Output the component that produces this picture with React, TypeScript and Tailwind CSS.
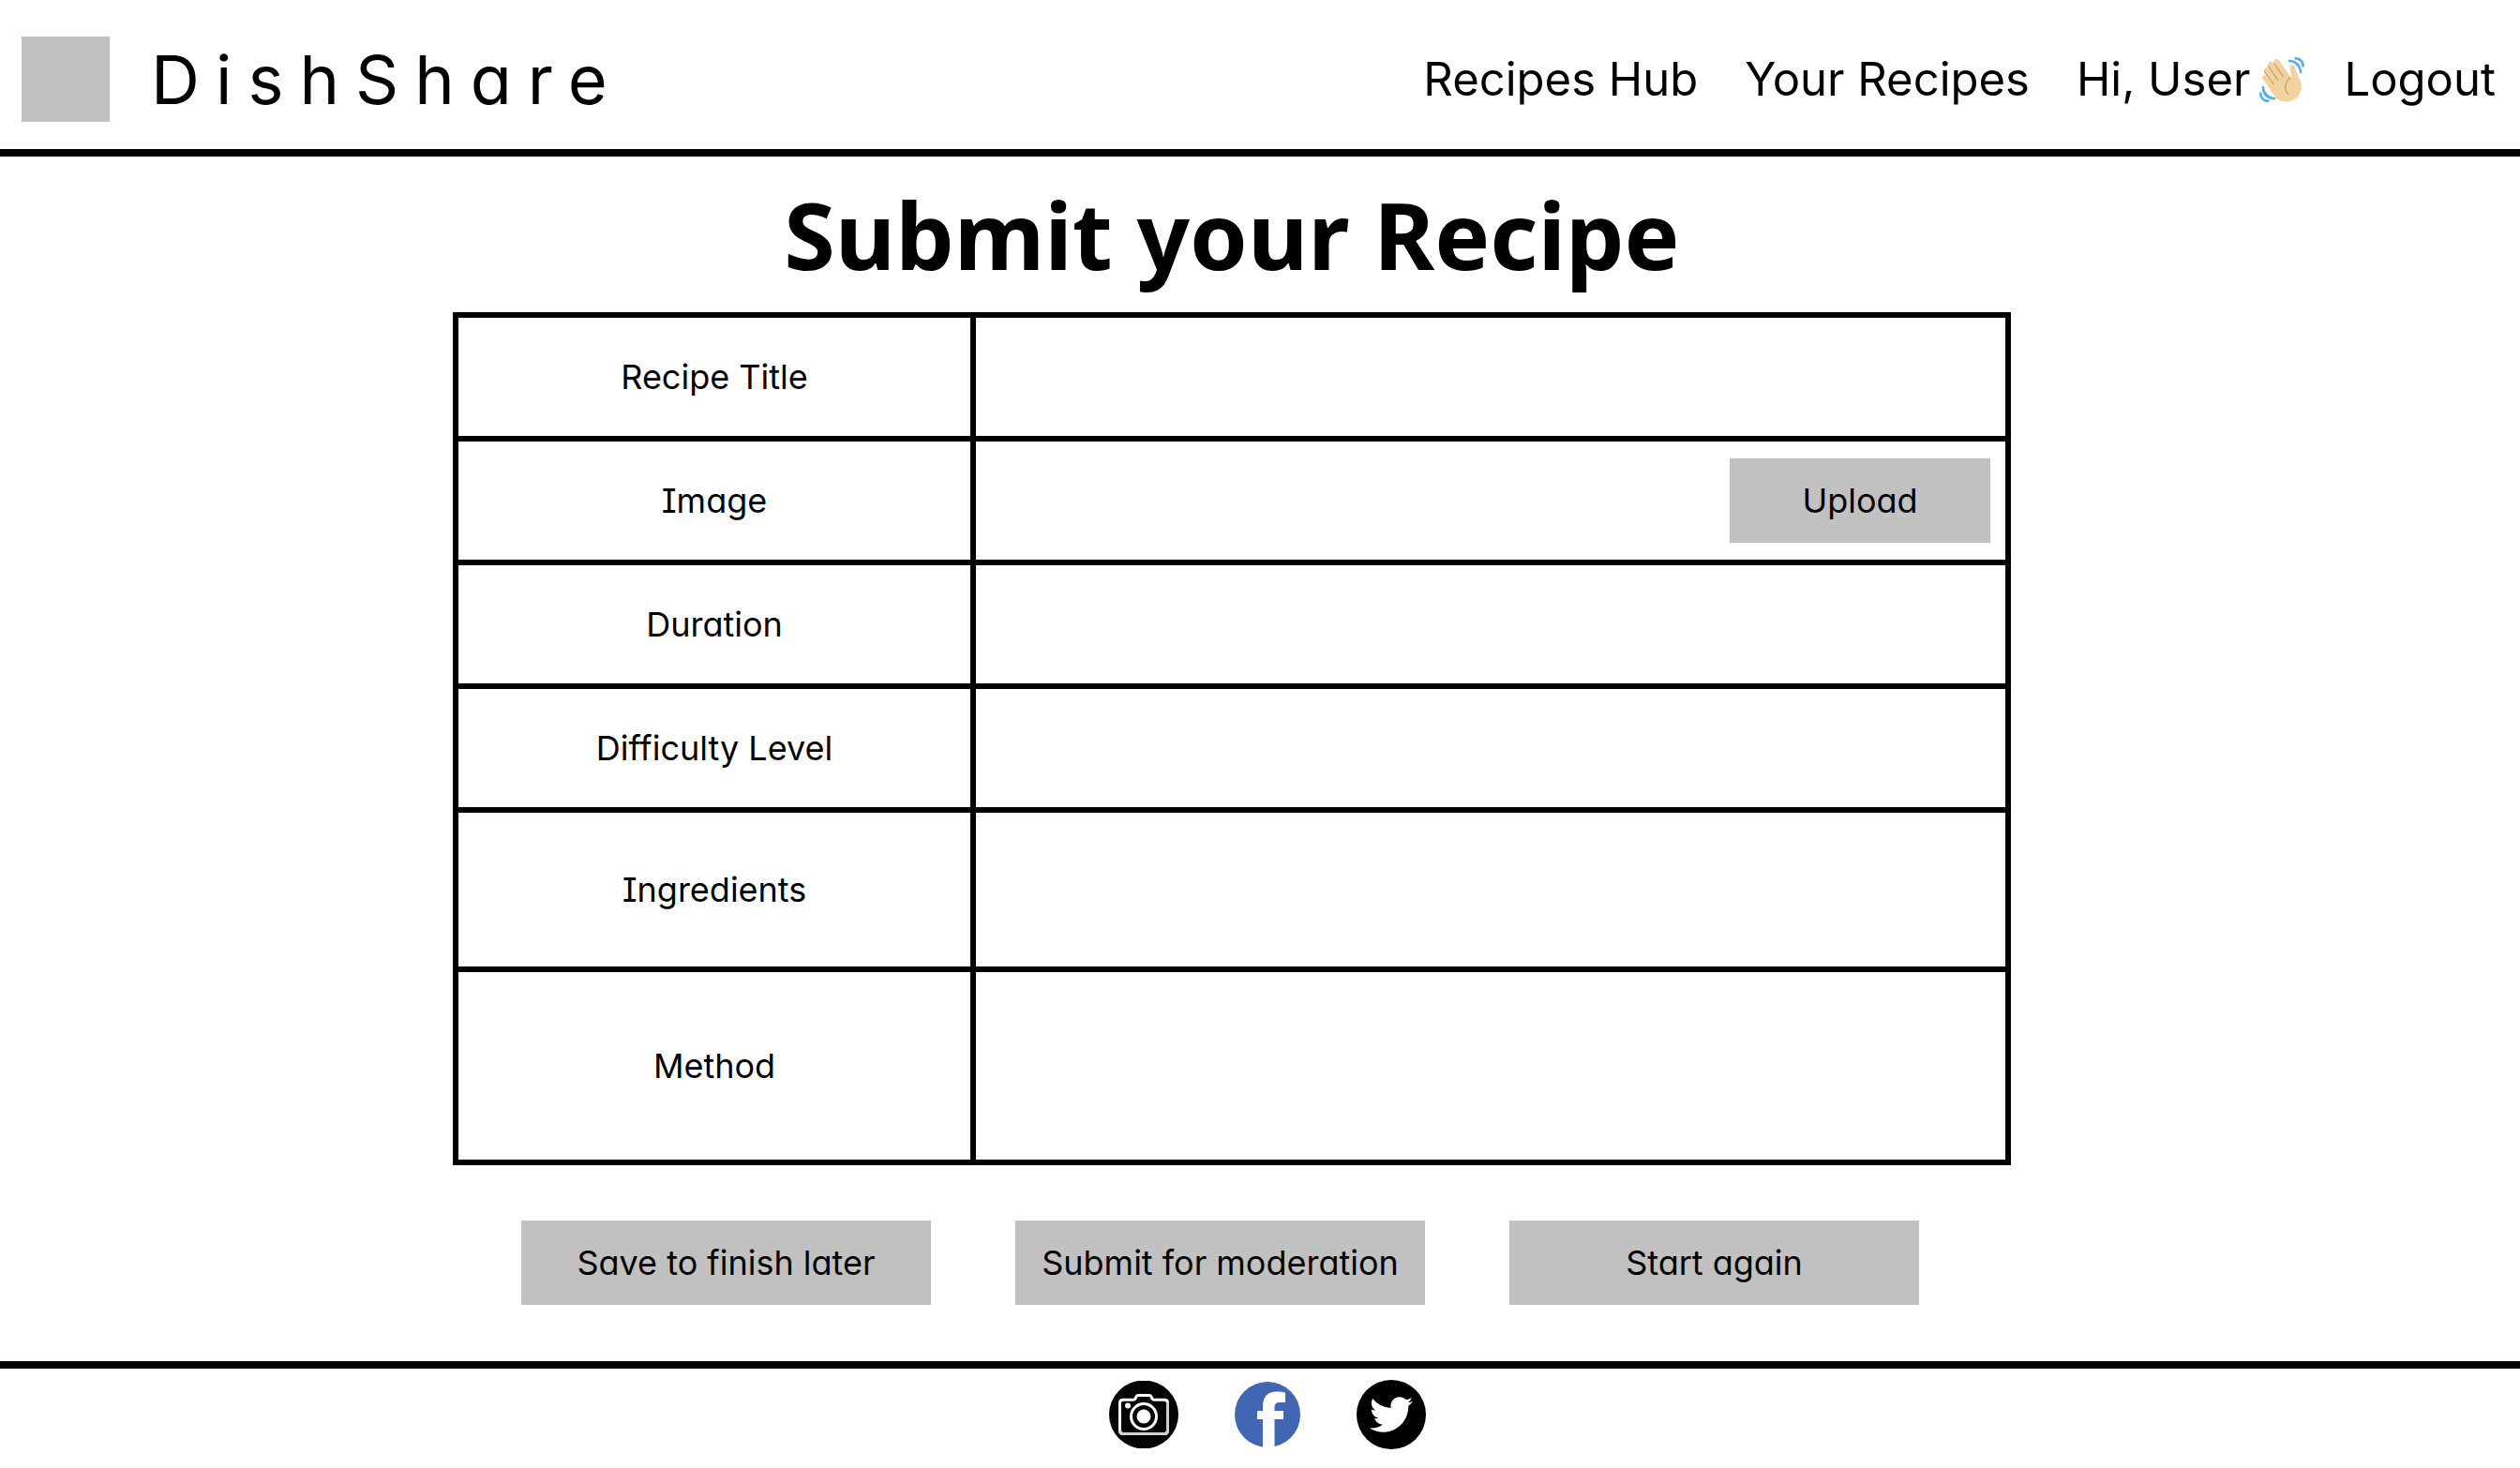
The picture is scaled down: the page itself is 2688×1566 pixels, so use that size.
import { FaTwitter } from "react-icons/fa";

function WavingHand() {
  return (
    <svg viewBox="0 0 36 36" className="h-[48px] w-[48px]" role="img" aria-label="waving hand">
      <path fill="#D2A077" d="M4.861 9.147c.94-.657 2.357-.531 3.201.166l-.968-1.407c-.779-1.111-.5-2.313.612-3.093 1.112-.777 4.263 1.312 4.263 1.312-.786-1.122-.639-2.544.483-3.331 1.122-.784 2.67-.513 3.456.611l10.42 14.72L25 31l-11.083-4.042L4.25 12.625c-.793-1.129-.519-2.686.611-3.478z" />
      <path fill="#F3D2A2" d="M2.695 17.336s-1.132-1.65.519-2.781c1.649-1.131 2.78.518 2.78.518l5.251 7.658c.181-.302.379-.6.6-.894L4.557 11.21s-1.131-1.649.519-2.78c1.649-1.131 2.78.518 2.78.518l6.855 9.997c.255-.208.516-.417.785-.622L7.549 6.732s-1.131-1.649.519-2.78c1.649-1.131 2.78.518 2.78.518l7.947 11.589c.292-.179.581-.334.871-.498L12.238 4.729s-1.131-1.649.518-2.78c1.649-1.131 2.78.518 2.78.518l7.854 11.454 1.194 1.742c-4.948 3.394-5.419 9.779-2.592 13.902.565.825 1.39.26 1.39.26-3.393-4.949-2.357-10.51 2.592-13.903L24.515 8.62s-.545-1.924 1.378-2.47c1.924-.545 2.47 1.379 2.47 1.379l1.685 5.004c.668 1.984 1.379 3.961 2.32 5.831 2.657 5.28 1.07 11.842-3.94 15.279-5.465 3.747-12.936 2.354-16.684-3.11L2.695 17.336z" />
      <g fill="#5DADEC">
        <path d="M12 32.042C8 32.042 3.958 28 3.958 24c0-.553-.405-1-.958-1s-1.042.447-1.042 1C1.958 30 6 34.042 12 34.042c.553 0 1-.489 1-1.042s-.447-.958-1-.958z" />
        <path d="M7 34c-3 0-5-2-5-5 0-.553-.447-1-1-1s-1 .447-1 1c0 4 3 7 7 7 .553 0 1-.447 1-1s-.447-1-1-1zM24 2c-.552 0-1 .448-1 1s.448 1 1 1c4 0 8 3.589 8 8 0 .552.448 1 1 1s1-.448 1-1c0-5.514-4-10-10-10z" />
        <path d="M29 .042c-.552 0-1 .406-1 .958s.448 1.042 1 1.042c3 0 4.958 2.225 4.958 4.958 0 .552.489 1 1.042 1s.958-.448.958-1C35.958 3.163 33 .042 29 .042z" />
      </g>
    </svg>
  );
}

function CameraIcon() {
  return (
    <svg viewBox="0 0 74 72" className="h-[72px] w-[74px]" aria-hidden="true">
      <ellipse cx="37" cy="36" rx="37" ry="36.5" fill="#050404" />
      <g fill="none" stroke="#fff" strokeWidth="3" strokeLinejoin="round">
        <path d="M15 20.200h10.500q2.500 0 3-2l.5-1.200q.6-1.500 2.400-1.500h11.200q1.800 0 2.400 1.500l.5 1.200q.5 2 3 2H59q3.500 0 3.500 3.500V53q0 3.500-3.500 3.500H15q-3.500 0-3.500-3.500V23.700q0-3.500 3.500-3.500z" />
        <path d="M62.500 23V53q0 3.500-3.500 3.500H15q-3.500 0-3.500-3.500" stroke="#cfcfcf" />
        <circle cx="37" cy="38" r="13.500" />
      </g>
      <circle cx="37" cy="38" r="7.500" fill="#fff" />
      <circle cx="20" cy="26.500" r="3" fill="#fff" />
    </svg>
  );
}

function FacebookIcon() {
  return (
    <svg viewBox="0 0 70 70" className="h-[70px] w-[70px]" aria-hidden="true">
      <circle cx="35" cy="35" r="35" fill="#4267b2" />
      <path fill="#fff" d="M30 70V40h-6V31h6v-4.500C30 16 35 10.500 45 10.500q5 0 9 1V22h-5.500C44 22 42.500 24 42.500 27.500V31H52v9h-9.500v30z" />
    </svg>
  );
}

const navLink = "hover:underline";
const field = "block w-full bg-transparent px-6 text-[36px] outline-none";
const action = "h-[90px] flex-1 whitespace-nowrap bg-[#c1c1c1] text-[36px] leading-[40px]";

const rows = [
  { id: "title", label: "Recipe Title", height: "h-[132px]", input: "h-[126px]" },
  { id: "image", label: "Image", height: "h-[132px]", input: "h-[126px]", upload: true },
  { id: "duration", label: "Duration", height: "h-[132px]", input: "h-[126px]" },
  { id: "difficulty", label: "Difficulty Level", height: "h-[132px]", input: "h-[126px]" },
  { id: "ingredients", label: "Ingredients", height: "h-[170px]", input: "h-[164px]", multiline: true },
  { id: "method", label: "Method", height: "h-[206px]", input: "h-[200px]", multiline: true },
];

export default function App() {
  return (
    <div className="flex min-h-screen flex-col bg-white font-['Inter','Liberation_Sans',sans-serif] text-black [font-feature-settings:'cv11','cv08']">
      <header className="flex items-center justify-between border-b-8 border-black pt-[39px] pr-[26px] pb-[29px] pl-[23px]">
        <a href="#home" className="flex items-center gap-[44px]">
          <span className="h-[91px] w-[94px] bg-[#c1c1c1]" />
          <span className="text-[72px] leading-[80px] tracking-[17px]">DishShare</span>
        </a>
        <nav className="flex items-center text-[49px] leading-[60px]">
          <a href="#hub" className={navLink}>Recipes Hub</a>
          <a href="#yours" className={`${navLink} ml-[50px]`}>Your Recipes</a>
          <a href="#profile" className={`${navLink} ml-[50px] flex items-center gap-[10px]`}>
            Hi, User
            <WavingHand />
          </a>
          <a href="#logout" className={`${navLink} ml-[42px]`}>Logout</a>
        </nav>
      </header>

      <main className="flex flex-1 flex-col pr-[60px]">
        <form className="mx-auto w-full max-w-[1662px]" onSubmit={(e) => e.preventDefault()}>
          <h1 className="pt-[15px] text-center font-['Noto_Sans',sans-serif] text-[99px] leading-[136px] font-bold">
            Submit your Recipe
          </h1>
          <table className="mt-[15px] w-full table-fixed border-collapse border-6 border-black">
            <colgroup>
              <col className="w-1/3" />
              <col />
            </colgroup>
            <tbody>
              {rows.map((row) => (
                <tr key={row.id} className={row.height}>
                  <th scope="row" className="border-6 border-black p-0 text-center text-[36px] leading-[40px] font-normal">
                    <label htmlFor={row.id}>{row.label}</label>
                  </th>
                  <td className="border-6 border-black p-0">
                    <div className="flex items-center">
                      {row.multiline ? (
                        <textarea id={row.id} className={`${field} ${row.input} resize-none`} />
                      ) : (
                        <input id={row.id} type="text" className={`${field} ${row.input}`} />
                      )}
                      {row.upload && (
                        <button type="button" className="mr-[16px] h-[90px] w-[278px] shrink-0 bg-[#c1c1c1] text-[36px] leading-[40px]">
                          Upload
                        </button>
                      )}
                    </div>
                  </td>
                </tr>
              ))}
            </tbody>
          </table>
          <div className="mt-[59px] flex gap-[90px] pr-[98px] pl-[73px]">
            <button type="button" className={action}>Save to finish later</button>
            <button type="submit" className={action}>Submit for moderation</button>
            <button type="reset" className={action}>Start again</button>
          </div>
        </form>
      </main>

      <footer className="flex items-center justify-center gap-[60px] border-t-8 border-black pt-[12px] pb-[20px] pl-[16px]">
        <a href="#photos" aria-label="Photos"><CameraIcon /></a>
        <a href="#facebook" aria-label="Facebook"><FacebookIcon /></a>
        <a href="#twitter" aria-label="Twitter" className="flex h-[74px] w-[74px] items-center justify-center rounded-full bg-black text-white">
          <FaTwitter className="h-[46px] w-[46px]" />
        </a>
      </footer>
    </div>
  );
}
